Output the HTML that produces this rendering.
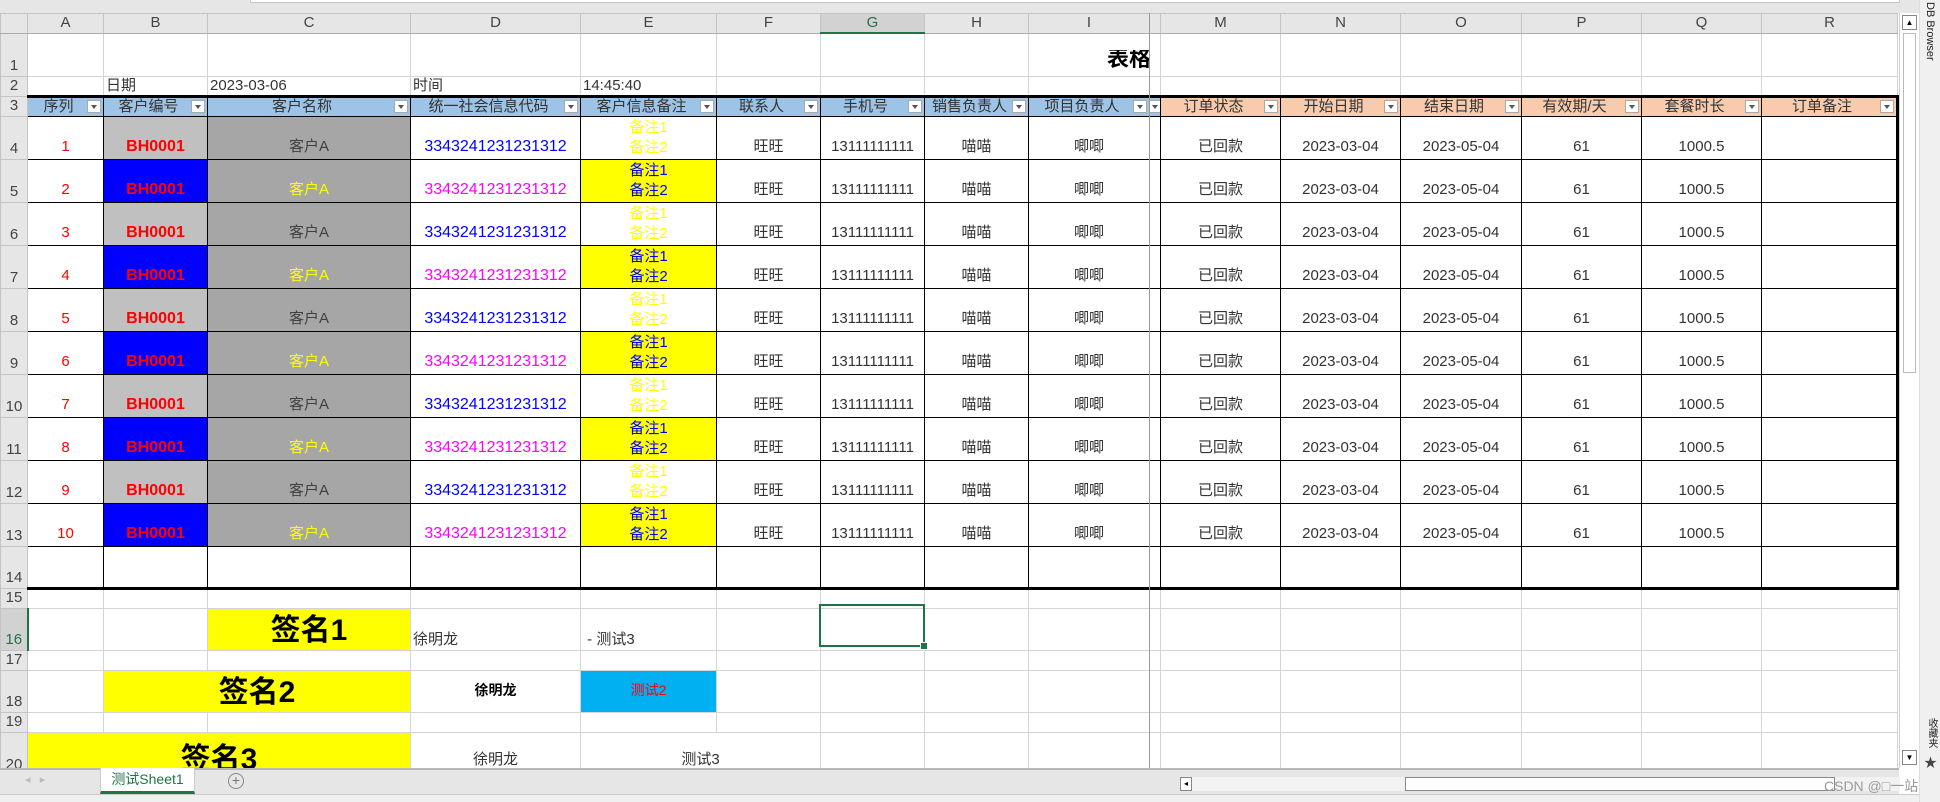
<!DOCTYPE html>
<html><head><meta charset="utf-8">
<style>
*{box-sizing:border-box;margin:0;padding:0}
body{width:1940px;height:802px;overflow:hidden;background:#fff;font-family:"Liberation Sans","Noto Sans CJK SC",sans-serif;position:relative}
#top{position:absolute;left:0;top:0;width:1940px;height:13px;background:#e6e6e6}
#top div{position:absolute;left:250px;top:0;width:1650px;height:3px;background:#fff;border:1px solid #c8c8c8;border-top:none}
table{position:absolute;left:0;top:13px;border-collapse:collapse;table-layout:fixed;width:1897px}
td{border:1px solid #d4d4d4;font-size:15px;color:#333;white-space:nowrap;overflow:hidden;vertical-align:bottom;text-align:center;padding:0 2px 3px;position:relative;line-height:18px}
tr.ch td{background:#e6e6e6;color:#444;vertical-align:middle;font-size:15px;padding:0;border-color:#c4c4c4;border-bottom:1px solid #ababab}
td.rh{background:#e6e6e6;color:#444;text-align:center;padding:0 0 1px;border-color:#c4c4c4;font-size:15px}
td.t{border:1px solid #000}
tr.h td.t{border-top:3px solid #000;background:#9dc3e6;color:#333;vertical-align:middle;padding:0 16px 0 2px;line-height:15px}
tr.h td.o{background:#f8cbad}
td.rr{border-right:3px solid #000!important}
tr.last td.t{border-bottom:3px solid #000}
.f{position:absolute;right:2px;top:2px;width:14px;height:13px;background:#fff;border:1px solid #aaa}
.f:after{content:"";position:absolute;left:3px;top:4px;border-left:3px solid transparent;border-right:3px solid transparent;border-top:4px solid #555}
.ra{color:#f00}
.b1{background:#c0c0c0;color:#f00;font-weight:bold;font-size:16px}
.b2{background:#0000ff;color:#f00;font-weight:bold;font-size:16px}
.c1{background:#a6a6a6;color:#404040}
.c2{background:#a6a6a6;color:#ff0}
.d1{color:#00f;font-size:16px}
.d2{color:#f0f;font-size:16px}
.e1{color:#ff0;line-height:20px;padding-bottom:1px}
.e2{background:#ff0;color:#00f;line-height:20px;padding-bottom:1px}
.sig{background:#ff0;color:#000;font-weight:bold;font-size:30px;line-height:34px;padding-bottom:2px}
.l{text-align:left}
#freeze{position:absolute;left:1149px;top:13px;width:1px;height:755px;background:#9a9a9a}
#sel{position:absolute;left:819px;top:604px;width:106px;height:43px;border:2px solid #217346}
#sel:after{content:"";position:absolute;right:-5px;bottom:-5px;width:6px;height:6px;background:#217346;border:1px solid #fff}
#vs{position:absolute;left:1899px;top:13px;width:20px;height:755px;background:#fff;border-left:1px solid #d0d0d0}
#vs .a{position:absolute;left:2px;width:15px;height:15px;border:1px solid #888;background:#fff;font-size:8px;text-align:center;line-height:13px;color:#000}
#vs .thumb{position:absolute;left:3px;top:20px;width:13px;height:340px;border:1px solid #bbb;background:#fff}
#side{position:absolute;left:1919px;top:0;width:21px;height:802px;background:#f0f0f0;border-left:1px solid #ddd}
#side .v{position:absolute;left:4px;writing-mode:vertical-rl;font-size:11px;color:#222}
#tabs{position:absolute;left:0;top:768px;width:1899px;height:26px;background:#e6e6e6;border-top:2px solid #b8b8b8}
#tab{position:absolute;left:100px;top:-2px;width:95px;height:26px;background:#fff;border:1px solid #ccc;border-top:none;border-bottom:3px solid #217346;font-size:14px;color:#217346;text-align:center;line-height:22px}
#plus{position:absolute;left:228px;top:3px;width:16px;height:16px;border:1px solid #888;border-radius:50%;font-size:14px;line-height:13px;text-align:center;color:#777}
#hs{position:absolute;left:1180px;top:7px;width:720px;height:14px;background:#f2f2f2}
#hs .th{position:absolute;left:225px;top:0;width:430px;height:14px;background:#fff;border:1px solid #888}
#bot{position:absolute;left:0;top:794px;width:1919px;height:8px;background:#f0f0f0;border-top:1px solid #ccc}
#csdn{position:absolute;left:1824px;top:776px;font-size:14px;color:#999}
</style></head><body>
<div id="top"><div></div></div>
<table>
<colgroup><col style="width:27px"><col style="width:76px"><col style="width:104px"><col style="width:203px"><col style="width:170px"><col style="width:136px"><col style="width:104px"><col style="width:104px"><col style="width:104px"><col style="width:121px"><col style="width:11px"><col style="width:120px"><col style="width:120px"><col style="width:121px"><col style="width:120px"><col style="width:120px"><col style="width:136px"></colgroup>
<tr class="ch" style="height:19px"><td></td><td>A</td><td>B</td><td>C</td><td>D</td><td>E</td><td>F</td><td style="background:#d2d2d2;color:#217346;border-bottom:2px solid #217346">G</td><td>H</td><td>I</td><td></td><td>M</td><td>N</td><td>O</td><td>P</td><td>Q</td><td>R</td></tr>
<tr style="height:43px"><td class="rh">1</td><td></td><td></td><td></td><td></td><td></td><td></td><td></td><td></td><td style="text-align:right;font-weight:bold;font-size:22px;color:#000;padding:0 0 8px"><span style="display:inline-block;width:42px;overflow:hidden;text-align:left;vertical-align:bottom">表格</span></td><td></td><td></td><td></td><td></td><td></td><td></td><td></td></tr>
<tr style="height:19px"><td class="rh">2</td><td></td><td class="l" style="padding-bottom:0">日期</td><td class="l" style="padding-bottom:0">2023-03-06</td><td class="l" style="padding-bottom:0">时间</td><td class="l" style="padding-bottom:0">14:45:40</td><td></td><td></td><td></td><td></td><td></td><td></td><td></td><td></td><td></td><td></td><td></td></tr>
<tr class="h" style="height:17px"><td class="rh">3</td><td class="t">序列<i class="f"></i></td><td class="t">客户编号<i class="f"></i></td><td class="t">客户名称<i class="f"></i></td><td class="t">统一社会信息代码<i class="f"></i></td><td class="t">客户信息备注<i class="f"></i></td><td class="t">联系人<i class="f"></i></td><td class="t">手机号<i class="f"></i></td><td class="t">销售负责人<i class="f"></i></td><td class="t">项目负责人<i class="f"></i></td><td class="t" style="padding:0"><i class="f" style="right:-2px"></i></td><td class="t o">订单状态<i class="f"></i></td><td class="t o">开始日期<i class="f"></i></td><td class="t o">结束日期<i class="f"></i></td><td class="t o">有效期/天<i class="f"></i></td><td class="t o">套餐时长<i class="f"></i></td><td class="t o rr">订单备注<i class="f"></i></td></tr>
<tr style="height:43px"><td class="rh">4</td><td class="t ra">1</td><td class="t b1">BH0001</td><td class="t c1">客户A</td><td class="t d1">3343241231231312</td><td class="t e1">备注1<br>备注2</td><td class="t">旺旺</td><td class="t">13111111111</td><td class="t">喵喵</td><td class="t">唧唧</td><td class="t"></td><td class="t">已回款</td><td class="t">2023-03-04</td><td class="t">2023-05-04</td><td class="t">61</td><td class="t">1000.5</td><td class="t rr"></td></tr>
<tr style="height:43px"><td class="rh">5</td><td class="t ra">2</td><td class="t b2">BH0001</td><td class="t c2">客户A</td><td class="t d2">3343241231231312</td><td class="t e2">备注1<br>备注2</td><td class="t">旺旺</td><td class="t">13111111111</td><td class="t">喵喵</td><td class="t">唧唧</td><td class="t"></td><td class="t">已回款</td><td class="t">2023-03-04</td><td class="t">2023-05-04</td><td class="t">61</td><td class="t">1000.5</td><td class="t rr"></td></tr>
<tr style="height:43px"><td class="rh">6</td><td class="t ra">3</td><td class="t b1">BH0001</td><td class="t c1">客户A</td><td class="t d1">3343241231231312</td><td class="t e1">备注1<br>备注2</td><td class="t">旺旺</td><td class="t">13111111111</td><td class="t">喵喵</td><td class="t">唧唧</td><td class="t"></td><td class="t">已回款</td><td class="t">2023-03-04</td><td class="t">2023-05-04</td><td class="t">61</td><td class="t">1000.5</td><td class="t rr"></td></tr>
<tr style="height:43px"><td class="rh">7</td><td class="t ra">4</td><td class="t b2">BH0001</td><td class="t c2">客户A</td><td class="t d2">3343241231231312</td><td class="t e2">备注1<br>备注2</td><td class="t">旺旺</td><td class="t">13111111111</td><td class="t">喵喵</td><td class="t">唧唧</td><td class="t"></td><td class="t">已回款</td><td class="t">2023-03-04</td><td class="t">2023-05-04</td><td class="t">61</td><td class="t">1000.5</td><td class="t rr"></td></tr>
<tr style="height:43px"><td class="rh">8</td><td class="t ra">5</td><td class="t b1">BH0001</td><td class="t c1">客户A</td><td class="t d1">3343241231231312</td><td class="t e1">备注1<br>备注2</td><td class="t">旺旺</td><td class="t">13111111111</td><td class="t">喵喵</td><td class="t">唧唧</td><td class="t"></td><td class="t">已回款</td><td class="t">2023-03-04</td><td class="t">2023-05-04</td><td class="t">61</td><td class="t">1000.5</td><td class="t rr"></td></tr>
<tr style="height:43px"><td class="rh">9</td><td class="t ra">6</td><td class="t b2">BH0001</td><td class="t c2">客户A</td><td class="t d2">3343241231231312</td><td class="t e2">备注1<br>备注2</td><td class="t">旺旺</td><td class="t">13111111111</td><td class="t">喵喵</td><td class="t">唧唧</td><td class="t"></td><td class="t">已回款</td><td class="t">2023-03-04</td><td class="t">2023-05-04</td><td class="t">61</td><td class="t">1000.5</td><td class="t rr"></td></tr>
<tr style="height:43px"><td class="rh">10</td><td class="t ra">7</td><td class="t b1">BH0001</td><td class="t c1">客户A</td><td class="t d1">3343241231231312</td><td class="t e1">备注1<br>备注2</td><td class="t">旺旺</td><td class="t">13111111111</td><td class="t">喵喵</td><td class="t">唧唧</td><td class="t"></td><td class="t">已回款</td><td class="t">2023-03-04</td><td class="t">2023-05-04</td><td class="t">61</td><td class="t">1000.5</td><td class="t rr"></td></tr>
<tr style="height:43px"><td class="rh">11</td><td class="t ra">8</td><td class="t b2">BH0001</td><td class="t c2">客户A</td><td class="t d2">3343241231231312</td><td class="t e2">备注1<br>备注2</td><td class="t">旺旺</td><td class="t">13111111111</td><td class="t">喵喵</td><td class="t">唧唧</td><td class="t"></td><td class="t">已回款</td><td class="t">2023-03-04</td><td class="t">2023-05-04</td><td class="t">61</td><td class="t">1000.5</td><td class="t rr"></td></tr>
<tr style="height:43px"><td class="rh">12</td><td class="t ra">9</td><td class="t b1">BH0001</td><td class="t c1">客户A</td><td class="t d1">3343241231231312</td><td class="t e1">备注1<br>备注2</td><td class="t">旺旺</td><td class="t">13111111111</td><td class="t">喵喵</td><td class="t">唧唧</td><td class="t"></td><td class="t">已回款</td><td class="t">2023-03-04</td><td class="t">2023-05-04</td><td class="t">61</td><td class="t">1000.5</td><td class="t rr"></td></tr>
<tr style="height:43px"><td class="rh">13</td><td class="t ra">10</td><td class="t b2">BH0001</td><td class="t c2">客户A</td><td class="t d2">3343241231231312</td><td class="t e2">备注1<br>备注2</td><td class="t">旺旺</td><td class="t">13111111111</td><td class="t">喵喵</td><td class="t">唧唧</td><td class="t"></td><td class="t">已回款</td><td class="t">2023-03-04</td><td class="t">2023-05-04</td><td class="t">61</td><td class="t">1000.5</td><td class="t rr"></td></tr>
<tr class="last" style="height:42px"><td class="rh">14</td><td class="t"></td><td class="t"></td><td class="t"></td><td class="t"></td><td class="t"></td><td class="t"></td><td class="t"></td><td class="t"></td><td class="t"></td><td class="t"></td><td class="t"></td><td class="t"></td><td class="t"></td><td class="t"></td><td class="t"></td><td class="t rr"></td></tr>
<tr style="height:18px"><td class="rh">15</td><td></td><td></td><td></td><td></td><td></td><td></td><td></td><td></td><td></td><td></td><td></td><td></td><td></td><td></td><td></td><td></td></tr>
<tr style="height:42px"><td class="rh" style="background:#d2d2d2;color:#217346;border-right:2px solid #217346">16</td><td></td><td></td><td class="sig">签名1</td><td class="l" style="padding-bottom:1px">徐明龙</td><td class="l" style="padding-bottom:1px">&nbsp;- 测试3</td><td></td><td></td><td></td><td></td><td></td><td></td><td></td><td></td><td></td><td></td><td></td></tr>
<tr style="height:18px"><td class="rh">17</td><td></td><td></td><td></td><td></td><td></td><td></td><td></td><td></td><td></td><td></td><td></td><td></td><td></td><td></td><td></td><td></td></tr>
<tr style="height:42px"><td class="rh">18</td><td></td><td colspan="2" class="sig">签名2</td><td style="vertical-align:middle;font-weight:bold;font-size:14px;color:#000">徐明龙</td><td style="vertical-align:middle;background:#00b0f0;color:#f00;font-size:14px">测试2</td><td></td><td></td><td></td><td></td><td></td><td></td><td></td><td></td><td></td><td></td><td></td></tr>
<tr style="height:17px"><td class="rh">19</td><td></td><td></td><td></td><td></td><td></td><td></td><td></td><td></td><td></td><td></td><td></td><td></td><td></td><td></td><td></td><td></td></tr>
<tr style="height:43px"><td class="rh">20</td><td colspan="3" class="sig" style="vertical-align:bottom;padding-bottom:0;line-height:30px">签名3</td><td style="padding-bottom:6px">徐明龙</td><td colspan="2" style="padding-bottom:6px">测试3</td><td></td><td></td><td></td><td></td><td></td><td></td><td></td><td></td><td></td><td></td></tr>
</table>
<div id="freeze"></div>
<div id="sel"></div>
<div id="vs"><div class="a" style="top:2px">▲</div><div class="thumb"></div><div class="a" style="top:737px">▼</div></div>
<div id="tabs"><span style="position:absolute;left:25px;top:3px;color:#bbb;font-size:11px">◂ &nbsp; ▸</span><div id="tab">测试Sheet1</div><div id="plus">+</div><div id="hs"><div style="position:absolute;left:0;top:0;width:12px;height:14px;border:1px solid #888;background:#fff;font-size:8px;line-height:12px;text-align:center">◂</div><div class="th"></div></div></div>
<div id="bot"></div>
<div id="csdn">CSDN @□一站</div>
<div id="side"><div class="v" style="top:2px">DB Browser</div><div class="v" style="top:718px;font-size:10px">收藏夹</div><div style="position:absolute;left:4px;top:752px;font-size:13px;color:#444">★</div></div>
</body></html>
